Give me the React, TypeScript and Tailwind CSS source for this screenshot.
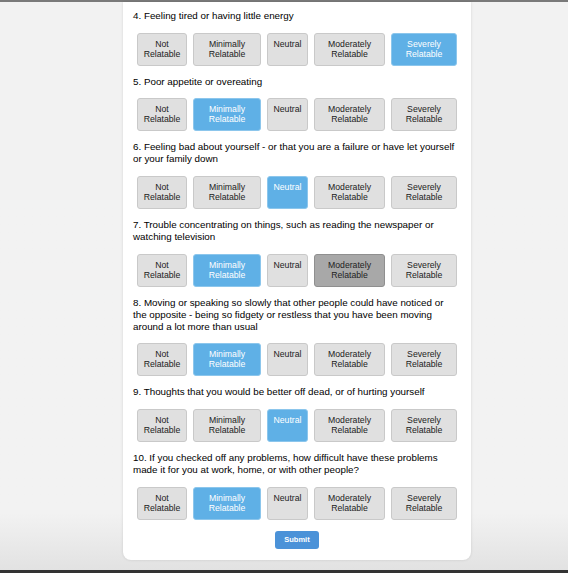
import { useState } from "react"

const OPTIONS = [
  { label: ["Not", "Relatable"], w: "w-[50px]" },
  { label: ["Minimally", "Relatable"], w: "w-[68px]" },
  { label: ["Neutral"], w: "w-[41px]" },
  { label: ["Moderately", "Relatable"], w: "w-[71px]" },
  { label: ["Severely", "Relatable"], w: "w-[66px]" },
]

const QUESTIONS = [
  { n: 4, text: "Feeling tired or having little energy", pick: 4 },
  { n: 5, text: "Poor appetite or overeating", pick: 1 },
  {
    n: 6,
    text: "Feeling bad about yourself - or that you are a failure or have let yourself or your family down",
    pick: 2,
  },
  {
    n: 7,
    text: "Trouble concentrating on things, such as reading the newspaper or watching television",
    pick: 1,
    hover: 3,
  },
  {
    n: 8,
    text: "Moving or speaking so slowly that other people could have noticed or the opposite - being so fidgety or restless that you have been moving around a lot more than usual",
    pick: 1,
  },
  { n: 9, text: "Thoughts that you would be better off dead, or of hurting yourself", pick: 2 },
  {
    n: 10,
    text: "If you checked off any problems, how difficult have these problems made it for you at work, home, or with other people?",
    pick: 1,
  },
]

export default function App() {
  const [answers, setAnswers] = useState<Record<number, number>>(
    Object.fromEntries(QUESTIONS.map((q) => [q.n, q.pick]))
  )

  return (
    <div className="h-[573px] overflow-hidden bg-[#f2f2f2] font-['Liberation_Sans',Arial,sans-serif] text-black">
      <div className="h-[2px] bg-[#7a7a7a]" />
      <div className="flex h-[568px] flex-col bg-gradient-to-b from-[#f2f2f2] from-[90%] to-[#e2e2e2]">
        <div className="mx-[123px] w-[348px] rounded-b-[8px] bg-white pl-[10px] pr-[14px] pb-[11px] shadow-[0_0_3px_rgba(0,0,0,0.12)]">
          {QUESTIONS.map((q, qi) => (
            <div key={q.n}>
              <p className={`${qi === 0 ? "pt-[8px]" : "pt-[10px]"} pb-[10.7px] text-[9.8px] leading-[12px]`}>
                {q.n}. {q.text}
              </p>
              <div className="flex gap-[6px] pl-[4px]">
                {OPTIONS.map((o, i) => {
                  const on = answers[q.n] === i
                  const hover = q.hover === i
                  return (
                    <button
                      key={i}
                      onClick={() => setAnswers({ ...answers, [q.n]: i })}
                      className={`${o.w} flex h-[33px] shrink-0 flex-col items-center justify-start rounded-[3px] border pt-[5px] text-center text-[8.7px] leading-[10px] ${
                        on
                          ? "border-[#8cc6ec] bg-[#5fb0e6] text-white"
                          : hover
                          ? "border-[#8f8f8f] bg-[#a8a8a8] text-[#222]"
                          : "border-[#c9c9c9] bg-[#e0e0e0] text-[#222]"
                      }`}
                    >
                      {o.label.map((l) => (
                        <span key={l} className="block">
                          {l}
                        </span>
                      ))}
                    </button>
                  )
                })}
              </div>
            </div>
          ))}
          <div className="mt-[11px] flex justify-center pl-[4px]">
            <button className="h-[18px] w-[44px] rounded-[3px] bg-[#4b92d8] text-[7.5px] font-bold text-white">
              Submit
            </button>
          </div>
        </div>
      </div>
      <div className="h-[3px] bg-[#333]" />
    </div>
  )
}
